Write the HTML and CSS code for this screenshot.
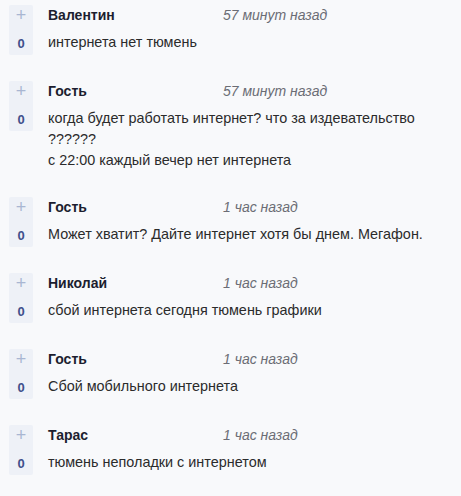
FILE: index.html
```html
<!DOCTYPE html>
<html lang="ru">
<head>
  <meta charset="UTF-8">
  <title>Комментарии</title>
  <link rel="stylesheet" href="styles.css">
</head>
<body>
  <div class="comments">

    <div class="comment">
      <div class="vote">
        <span class="plus">+</span>
        <span class="score">0</span>
      </div>
      <div class="comment-body">
        <div class="meta">
          <span class="author">Валентин</span>
          <span class="time">57 минут назад</span>
        </div>
        <p class="text">интернета нет тюмень</p>
      </div>
    </div>

    <div class="comment">
      <div class="vote">
        <span class="plus">+</span>
        <span class="score">0</span>
      </div>
      <div class="comment-body">
        <div class="meta">
          <span class="author">Гость</span>
          <span class="time">57 минут назад</span>
        </div>
        <p class="text">когда будет работать интернет? что за издевательство ??????<br>с 22:00 каждый вечер нет интернета</p>
      </div>
    </div>

    <div class="comment">
      <div class="vote">
        <span class="plus">+</span>
        <span class="score">0</span>
      </div>
      <div class="comment-body">
        <div class="meta">
          <span class="author">Гость</span>
          <span class="time">1 час назад</span>
        </div>
        <p class="text">Может хватит? Дайте интернет хотя бы днем. Мегафон.</p>
      </div>
    </div>

    <div class="comment">
      <div class="vote">
        <span class="plus">+</span>
        <span class="score">0</span>
      </div>
      <div class="comment-body">
        <div class="meta">
          <span class="author">Николай</span>
          <span class="time">1 час назад</span>
        </div>
        <p class="text">сбой интернета сегодня тюмень графики</p>
      </div>
    </div>

    <div class="comment">
      <div class="vote">
        <span class="plus">+</span>
        <span class="score">0</span>
      </div>
      <div class="comment-body">
        <div class="meta">
          <span class="author">Гость</span>
          <span class="time">1 час назад</span>
        </div>
        <p class="text">Сбой мобильного интернета</p>
      </div>
    </div>

    <div class="comment">
      <div class="vote">
        <span class="plus">+</span>
        <span class="score">0</span>
      </div>
      <div class="comment-body">
        <div class="meta">
          <span class="author">Тарас</span>
          <span class="time">1 час назад</span>
        </div>
        <p class="text">тюмень неполадки с интернетом</p>
      </div>
    </div>

  </div>
</body>
</html>
```

FILE: styles.css
```css
* {
  box-sizing: border-box;
}

body {
  margin: 0;
  padding: 5px 0 0 9px;
  background: #f8f9fb;
  font-family: 'Liberation Sans', Arial, sans-serif;
  font-size: 14px;
  color: #2b2b2b;
}

.comment {
  display: flex;
  gap: 15px;
  margin-bottom: 26px;
}

.vote {
  flex: 0 0 24px;
  height: 50px;
  background: #eef1f7;
  border-radius: 2px;
  display: flex;
  flex-direction: column;
  align-items: center;
}

.plus {
  height: 21px;
  line-height: 21px;
  font-size: 18px;
  color: #a9b6d2;
}

.score {
  margin-top: 7px;
  line-height: 21px;
  font-size: 13px;
  font-weight: bold;
  color: #3f4f8c;
}

.comment-body {
  width: 380px;
}

.meta {
  display: grid;
  grid-template-columns: 175px auto;
  line-height: 21px;
}

.author {
  font-weight: bold;
  color: #1c1e2f;
}

.time {
  font-style: italic;
  color: #6b6d75;
}

.text {
  margin: 6px 0 0;
  font-size: 14.4px;
  line-height: 21px;
  color: #2b2b2b;
}
```
